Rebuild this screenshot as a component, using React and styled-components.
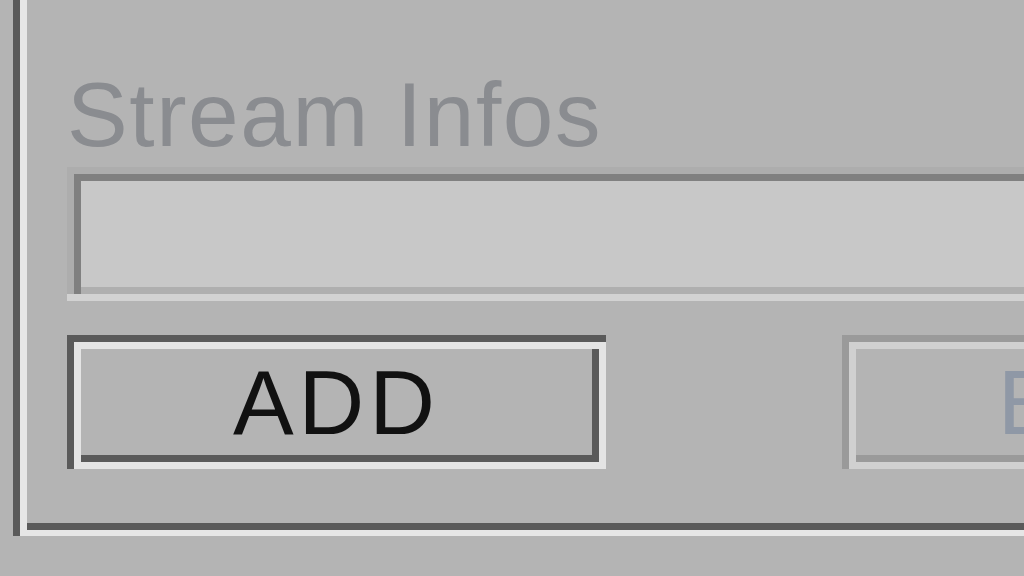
import React from 'react'
import styled, { createGlobalStyle } from 'styled-components'

const GlobalStyle = createGlobalStyle`
  html, body {
    margin: 0;
    padding: 0;
    background: #b4b4b4;
    overflow: hidden;
  }
  body {
    font-family: "Liberation Sans", Arial, sans-serif;
  }
`

const Screen = styled.div`
  width: 1024px;
  height: 576px;
  overflow: hidden;
  padding-left: 13px;
  box-sizing: border-box;
`

// etched group frame: dark/light on the left, dark/light on the bottom
const Frame = styled.div`
  width: 1200px;
  padding: 69px 0 67px 54px;
  box-shadow:
    inset 7px 0 0 0 #5a5a5a,
    inset 0 -6px 0 0 #e6e6e6,
    inset 14px 0 0 0 #e6e6e6,
    inset 0 -13px 0 0 #5a5a5a;
`

const Label = styled.div`
  font-size: 91px;
  line-height: 91px;
  letter-spacing: 1.6px;
  color: #8a8c90;
  white-space: nowrap;
  margin-bottom: 7px;
`

const Field = styled.div`
  height: 134px;
  background: #c8c8c8;
  box-shadow:
    inset 0 -7px 0 0 #d2d2d2,
    inset -7px 0 0 0 #d2d2d2,
    inset 7px 7px 0 0 #adadad,
    inset 14px 14px 0 0 #808080,
    inset -14px -14px 0 0 #afafaf;
`

const ButtonRow = styled.div`
  display: flex;
  gap: 236px;
  margin-top: 34px;
`

const Button = styled.div`
  width: 539px;
  height: 134px;
  flex: none;
  display: flex;
  align-items: center;
  justify-content: center;
  background: #b4b4b4;
  font-size: 91px;
  line-height: 91px;
  letter-spacing: 5px;
  white-space: nowrap;
  color: ${p => p.$disabled ? '#8f98a6' : '#111111'};
  box-shadow:
    inset 7px 7px 0 0 ${p => p.$disabled ? '#9a9a9a' : '#5a5a5a'},
    inset -7px -7px 0 0 ${p => p.$disabled ? '#d0d0d0' : '#e4e4e4'},
    inset 14px 14px 0 0 ${p => p.$disabled ? '#d0d0d0' : '#e4e4e4'},
    inset -14px -14px 0 0 ${p => p.$disabled ? '#9a9a9a' : '#5a5a5a'};
`

export default function App() {
  return (
    <Screen>
      <GlobalStyle />
      <Frame>
        <Label>Stream Infos</Label>
        <Field />
        <ButtonRow>
          <Button>ADD</Button>
          <Button $disabled>EDIT</Button>
        </ButtonRow>
      </Frame>
    </Screen>
  )
}
